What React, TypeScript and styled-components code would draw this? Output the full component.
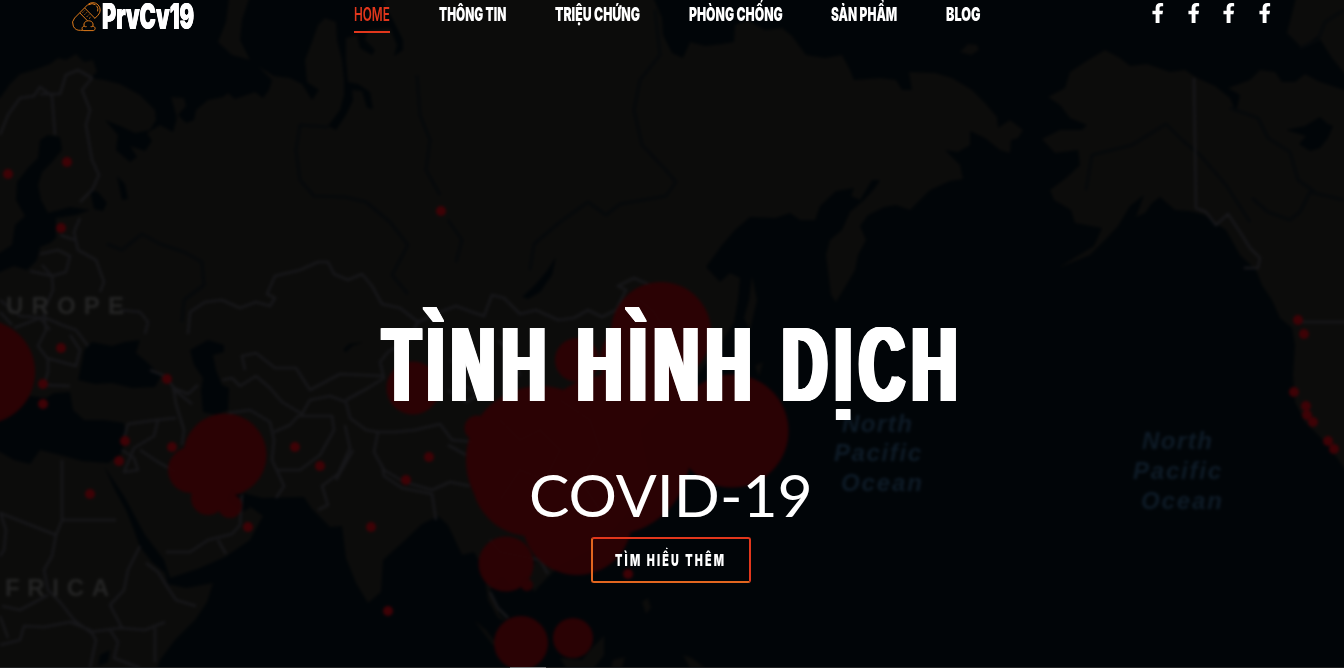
import React, { useLayoutEffect, useRef, useState } from "react";
import styled, { createGlobalStyle } from "styled-components";
import { FaFacebookF } from "react-icons/fa";

const GlobalStyle = createGlobalStyle`
  *, *::before, *::after { box-sizing: border-box; }
  body { margin: 0; background: #010508; overflow: hidden; }
  a { color: inherit; text-decoration: none; }
`;

const condensed = `Inter, "Liberation Sans", sans-serif`;

const Page = styled.div`
  position: relative;
  display: flex;
  flex-direction: column;
  width: 1344px;
  height: 668px;
  overflow: hidden;
  background: #010508;
  font-family: ${condensed};
  color: #fff;
`;

const MapLayer = styled.svg`
  position: absolute;
  inset: 0;
  width: 1344px;
  height: 668px;
`;

const Header = styled.header`
  position: relative;
  display: flex;
  align-items: flex-start;
  height: 40px;
  padding-left: 72px;
`;

const Brand = styled.a`
  display: flex;
  width: 282px;
`;

const BrandIcon = styled.svg`
  width: 30px;
  height: 32px;
  flex: none;
`;

const BrandName = styled.span`
  font-weight: 900;
  font-size: 36px;
  line-height: 32px;
  text-shadow: -0.5px 0, 0.5px 0;
`;

const Nav = styled.nav`
  display: flex;
  width: 798px;
  gap: 48.7px;
`;

const NavLink = styled.a<{ $active?: boolean }>`
  height: 33px;
  padding-top: 2px;
  font-size: 19px;
  line-height: 25px;
  font-weight: ${(p) => (p.$active ? 600 : 900)};
  color: ${(p) => (p.$active ? "#e2371c" : "#fff")};
  border-bottom: 2px solid ${(p) => (p.$active ? "#e2371c" : "transparent")};
`;

const Social = styled.div`
  display: flex;
  gap: 16px;
  padding-top: 3px;
  margin-left: -4px;
`;

const SocialLink = styled.a`
  display: flex;
  justify-content: center;
  width: 19.6px;
  font-size: 20px;
`;

const Hero = styled.main`
  position: relative;
  display: flex;
  flex-direction: column;
  align-items: center;
  padding: 264px 3px 0 0;
`;

/* The horizontal shadows thicken the stems without touching the crossbars. */
const Title = styled.h1`
  display: flex;
  gap: 24px;
  margin: 0 0 0 6px;
  font-family: "Liberation Sans", sans-serif;
  font-size: 106px;
  line-height: 120px;
  font-weight: 700;
  letter-spacing: 12px;
  text-shadow: -1.6px 0, 1.6px 0, -3.2px 0, 3.2px 0, -4.4px 0, 4.4px 0, -5.2px 0, 5.2px 0;
`;

const Subtitle = styled.p`
  margin: 36px 0 0;
  font-family: Lato, "Open Sans", sans-serif;
  font-size: 58px;
  line-height: 70px;
  font-weight: 400;
`;

const Cta = styled.a`
  display: flex;
  justify-content: center;
  align-items: center;
  width: 160px;
  height: 46px;
  margin: 7px 0 0 1px;
  padding-right: 1px;
  border: 2px solid;
  border-color: #e2371c #e2371c #e2661f #e2661f;
  border-radius: 3px;
  font-size: 16.5px;
  line-height: 24px;
  font-weight: 900;
  letter-spacing: 3.4px;
`;

const FootLine = styled.div`
  position: absolute;
  left: 0;
  right: 0;
  bottom: 0;
  height: 1px;
  padding-left: 510px;
  background: #202122;
  &::before {
    content: "";
    display: block;
    width: 36px;
    height: 1px;
    background: #77787a;
  }
`;

const FitBox = styled.span<{ $width: number }>`
  display: block;
  width: ${(p) => p.$width}px;
  white-space: nowrap;
`;

const FitInner = styled.span`
  display: inline-block;
  transform-origin: 0 50%;
`;

/* Condenses its text horizontally so that it fills the given width. */
function FitText({ width, children }: { width: number; children: string }) {
  const ref = useRef<HTMLSpanElement>(null);
  const [scale, setScale] = useState(1);
  useLayoutEffect(() => {
    if (ref.current) setScale(width / ref.current.offsetWidth);
  }, [width, children]);
  return (
    <FitBox $width={width}>
      <FitInner ref={ref} style={{ transform: `scaleX(${scale})` }}>
        {children}
      </FitInner>
    </FitBox>
  );
}

const LAND = [
  // Scandinavia, Russia and the Pacific coast, then back along South Asia
  "M-10 98L0 98 10 84 20 74 34 70 50 64 58 58 66 60 76 54 84 62 93 60 97 72 90 78 104 80 120 84 140 95 155 110 156 120 150 130 135 133 120 126 105 120 118 135 116 150 130 162 137 157 130 146 145 151 152 141 147 133 160 125 173 132 177 118 171 97 184 98 186 106 178 115 186 123 194 120 196 110 208 100 223 97 228 93 235 99 255 92 263 98 269 90 272 80 258 66 274 76 290 78 302 84 312 100 319 90 307 82 305 60 312 42 318 25 325 18 336 22 337 40 342 60 344 80 344 95 340 110 328 126 336 130 346 115 353 100 352 90 362 91 367 108 373 109 370 92 358 84 348 82 346 60 346 38 357 35 360 48 372 55 375 50 365 40 368 30 390 28 397 45 394 56 403 50 403 40 393 20 384 5 386 -10 650 -10 662 18 663 35 672 53 683 58 690 42 705 46 722 44 734 42 735 25 748 20 765 30 782 28 792 36 806 55 825 58 842 55 850 70 854 80 880 78 896 80 902 90 912 90 909 72 935 73 952 78 972 90 985 103 997 117 998 128 1010 120 1023 130 1018 138 1011 140 1010 153 1000 150 985 138 970 131 970 145 958 152 945 150 960 165 963 179 950 181 930 190 910 210 896 205 884 207 868 215 860 226 866 240 858 255 855 270 848 282 836 302 831 295 826 255 830 240 842 230 850 212 864 200 875 188 880 180 872 180 860 200 851 196 854 188 836 191 820 206 815 220 800 220 790 213 775 218 750 217 735 230 722 245 706 267 720 282 730 273 740 278 738 300 734 322 720 345 700 372 680 390 640 430 648 470 630 510 600 545 560 565 545 580 534 592 526 574 540 556 535 560 515 590 502 575 490 590 500 615 508 622 498 618 488 600 484 570 474 552 462 555 448 525 438 516 422 524 402 543 383 560 381 592 368 603 356 583 346 558 342 526 330 527 312 509 304 497 262 498 243 493 244 502 263 516 250 540 225 557 200 568 170 578 164 560 145 535 125 498 104 466 115 490 126 510 134 530 140 547 152 562 165 573 168 584 186 588 213 583 207 602 195 620 175 640 160 660 154 678 -10 678Z",
  "M230 -10L252 -10 242 20 240 40 250 60 232 55 218 42 226 22Z",
  "M1105 50L1120 58 1130 66 1147 64 1170 72 1185 70 1197 78 1215 86 1230 98 1236 112 1240 95 1228 88 1250 80 1260 70 1275 72 1282 82 1295 82 1305 74 1320 82 1344 90 1354 92 1354 478 1344 468 1328 445 1305 422 1295 402 1293 375 1295 345 1292 328 1280 318 1272 300 1262 285 1256 270 1240 255 1226 230 1214 222 1205 215 1190 211 1175 210 1160 197 1152 203 1145 213 1136 217 1144 195 1130 206 1118 226 1105 240 1090 255 1058 268 1094 246 1102 228 1075 223 1071 210 1054 200 1050 190 1066 178 1080 165 1078 150 1055 153 1042 139 1060 130 1082 130 1087 125 1070 118 1060 105 1048 97 1065 88 1070 72 1085 62Z",
  "M1298 -10L1354 -10 1354 85 1332 58 1318 36 1302 48 1287 33Z",
  "M960 52L968 44 977 45 979 50 971 55Z",
  "M752 276L757 300 750 330 744 318 749 300Z",
  "M755 366L763 362 759 376Z",
  "M474 620L486 630 500 648 492 644Z",
  "M592 648L604 636 604 655 594 668 566 668 560 658 582 660Z",
  "M642 602L648 598 651 608 646 614Z",
  "M613 660L625 657 622 668 611 668Z",
  "M683 655L692 658 705 668 690 668Z",
];

const WATER = [
  "M40 140L48 135 60 137 62 150 52 162 42 172 38 185 41 200 48 213 70 207 90 210 76 215 56 218 56 238 50 243 40 247 37 260 27 270 14 266 -10 276 -10 259 12 245 15 225 25 216 16 200 17 182 28 168 38 158Z",
  "M90 190L98 192 107 203 103 211 94 209Z",
  "M117 176L125 184 128 199 122 200Z",
  "M82 362L84 350 92 342 112 346 125 342 140 340 136 353 148 363 161 376 155 387 132 388 112 383 95 384 78 380Z",
  "M-10 420L18 408 30 396 46 398 54 393 70 392 73 410 84 420 104 420 124 423 126 440 120 455 108 463 82 461 64 456 40 450 30 464 14 460 -10 446Z",
  "M190 350L208 340 224 345 224 352 213 355 216 370 222 385 229 388 228 410 216 415 203 412 201 390 203 378 194 365Z",
  "M556 257L552 275 540 292 528 299 522 297 535 285 546 272Z",
  "M232 488L242 495 250 508 242 512 226 500Z",
  "M1286 130L1305 126 1320 117 1328 124 1333 126 1328 138 1320 148 1310 151 1299 144 1306 136Z",
  "M100 655L110 650 108 662 98 666Z",
  "M343 350L349 344 364 342 352 346 346 352Z",
];

const RIVERS =
  "M328 127L300 125 296 150 300 180 314 196 345 197 366 202 390 222 408 245 392 275 408 294 M417 75L420 115 430 140 426 170 440 195 M448 220L462 240 456 262 M655 10L660 55 640 80 634 110 642 145 664 168 676 182 666 196 620 204 606 215 588 202 560 222 534 244 530 270 M1344 200L1310 192 1300 212 1290 220 1268 212 1252 198 M1230 108L1258 118 1268 138 1290 152 1298 180 1315 192 M1086 190L1092 155 1132 145 1166 124 1182 140 1200 155 1226 185 1250 222 M107 244L122 250 142 234 160 244 184 252 202 262 204 285 184 300 182 322 M1344 10L1325 22 1318 40 1300 48";

const BORDERS =
  "M0 135L8 115 20 98 34 96 40 87 52 96 55 135 M40 94L60 94 66 75 78 70 92 78 82 90 90 110 86 125 92 160 99 175 92 190 80 202 M80 218L74 232 78 250 96 260 104 282 100 292 M60 235L75 240 M40 254L58 250 70 256 66 272 52 276 42 265 M30 271L52 276 53 290 44 310 46 330 38 346 47 358 76 366 80 350 70 335 M0 300L20 316 46 318 62 325 76 330 88 346 M14 328L40 318 50 330 M0 312L12 325 M48 358L48 372 44 385 70 386 M120 310L140 312 148 322 145 334 M188 334L190 312 205 302 222 300 240 308 256 302 270 306 275 298 267 294 275 276 300 270 318 262 328 262 334 274 348 280 362 274 372 286 382 304 400 308 418 322 440 312 456 306 472 312 484 316 492 295 504 298 520 314 536 310 558 320 574 318 588 310 602 317 616 310 626 290 618 286 634 278 652 286 M418 322L408 340 388 352 380 362 384 378 368 388 346 400 M245 370L242 356 256 353 275 368 296 368 310 390 340 374 384 376 M222 380L232 378 240 386 256 376 270 388 282 402 302 414 310 400 330 396 346 402 350 418 366 430 378 432 395 432 415 430 440 424 452 440 476 442 M378 432L374 452 384 470 404 482 432 490 450 482 470 486 M382 465L384 476 402 488 432 494 436 520 M150 370L165 376 174 388 188 394 198 385 M173 386L176 404 184 430 182 445 M172 388L192 404 M228 413L250 410 270 422 274 440 272 460 284 486 276 498 M274 432L290 425 298 416 332 416 334 430 320 455 300 470 276 470 M345 425L350 448 338 474 322 486 328 505 318 510 M353 450L336 480 M124 438L128 424 156 420 176 418 M158 420L154 436 134 448 124 472 138 470 134 458 122 450 M140 450L158 462 176 472 M62 460L62 520 56 535 M62 520L116 520 M0 513L56 535 52 556 44 570 48 590 60 602 74 620 90 632 120 628 145 630 165 622 M166 552L190 552 208 540 232 534 240 525 242 495 M218 540L226 554 M140 546L128 570 124 590 110 605 122 628 M146 563L158 572 168 588 176 600 196 606 M2 606L20 610 48 595 M0 616L8 638 M0 645L20 640 24 626 44 627 70 622 90 630 96 640 90 668 M110 630L118 642 114 658 140 668 M155 628L155 662 M0 512L6 530 4 550 0 556 M1194 78L1196 208 1206 212 1216 225 1228 214 1240 232 1250 248 1260 258 1258 268 1244 268 M1300 322L1354 322 M450 360L470 372 460 382 482 398 M498 340L510 352 520 376 M500 420L520 440 540 430 560 450 545 480 520 470 500 500 M560 400L590 420 600 450 580 480 600 510 M448 390L466 402 480 394 M448 445L466 455 M490 540L500 552 540 560 548 574 M490 592L498 608 508 618 M640 300L654 312 660 322 690 334";

const OUTBREAKS: [number, number, number][] = [
  [-17, 372, 52], [225, 455, 41.5], [191, 470, 23], [208, 498, 17], [230, 506, 12],
  [413, 388, 26.5], [661, 332, 50], [577, 360, 22], [640, 360, 40], [732, 431, 56.5],
  [540, 460, 74], [530, 478, 58], [577, 520, 55], [610, 455, 80], [640, 420, 60], [477, 428, 12.5],
  [506, 564, 27.5], [527, 585, 6], [521, 643, 27], [573, 638, 20],
];

const CASES: [number, number][] = [
  [8, 174], [67, 162], [61, 228], [441, 211], [61, 348], [43, 384], [43, 404],
  [167, 379], [125, 441], [119, 461], [172, 447], [90, 494], [248, 527],
  [295, 447], [320, 466], [429, 457], [406, 480], [371, 527], [388, 611],
  [628, 574], [1298, 320], [1304, 334], [1294, 392], [1306, 406], [1307, 415],
  [1313, 422], [1328, 441], [1334, 449],
];

const LABELS = [
  { text: "UROPE", x: 6, y: 314, w: 118, italic: false },
  { text: "FRICA", x: 5, y: 596, w: 104, italic: false },
  { text: "North", x: 842, y: 432, w: 70, italic: true },
  { text: "Pacific", x: 834, y: 461, w: 87, italic: true },
  { text: "Ocean", x: 841, y: 491, w: 81, italic: true },
  { text: "North", x: 1142, y: 449, w: 70, italic: true },
  { text: "Pacific", x: 1133, y: 479, w: 88, italic: true },
  { text: "Ocean", x: 1141, y: 509, w: 81, italic: true },
];

const MapLabel = styled.text<{ $italic: boolean }>`
  font-family: "Liberation Sans", sans-serif;
  font-weight: 700;
  font-size: 24px;
  font-style: ${(p) => (p.$italic ? "italic" : "normal")};
  fill: ${(p) => (p.$italic ? "#0e1b27" : "#242424")};
`;

function WorldMap() {
  return (
    <MapLayer viewBox="0 0 1344 668" aria-hidden="true">
      <defs>
        <filter
          id="soft"
          x="-10"
          y="-10"
          width="1364"
          height="688"
          filterUnits="userSpaceOnUse"
          colorInterpolationFilters="sRGB"
        >
          <feGaussianBlur stdDeviation="1.4" />
        </filter>
      </defs>
      <g filter="url(#soft)">
        <rect x="-10" y="-10" width="1364" height="688" fill="#010508" />
        <g fill="#0c0c0b">{LAND.map((d) => <path key={d} d={d} />)}</g>
        <g fill="#010508">{WATER.map((d) => <path key={d} d={d} />)}</g>
        <path d={RIVERS} fill="none" stroke="#06090b" strokeWidth="3" strokeLinejoin="round" />
        <path d={BORDERS} fill="none" stroke="#17171a" strokeWidth="2.6" strokeLinejoin="round" />
        <g fill="#2d0204" opacity="0.95">
          {OUTBREAKS.map(([x, y, r]) => <circle key={`${x}-${y}`} cx={x} cy={y} r={r} />)}
        </g>
        <g fill="#3e0206">
          {CASES.map(([x, y]) => <circle key={`${x}-${y}`} cx={x} cy={y} r={5} />)}
        </g>
        {LABELS.map((l) => (
          <MapLabel key={`${l.x}-${l.y}`} $italic={l.italic} x={l.x} y={l.y} textLength={l.w}>
            {l.text}
          </MapLabel>
        ))}
      </g>
    </MapLayer>
  );
}

function PillLogo() {
  return (
    <BrandIcon viewBox="0 0 30 32" fill="none" stroke="#dd7a1b" strokeWidth="1">
      <path d="M8.5 30.3A7.3 7.3 0 0 1 2.6 18L15.6 4.8A7.3 7.3 0 0 1 26 15.2L22.5 18.8M8.5 30.3H11" />
      <path d="M7.8 12.9L15.5 20.8M12.7 8L22.6 18" />
      <path d="M16.5 4.9Q20 2.4 23.6 4.8M24.6 5.8Q26.6 8.4 25.6 11.4" />
      <path d="M10.6 12.6L12.6 10.6M12.6 14.6L14.8 12.4M14.8 16.8L17 14.6M17 18.6L19 16.8" strokeDasharray="1.2 0.9" />
      <path d="M11.8 30.6C9.4 30 9.4 26.6 12.2 26.2C11.2 23 13.4 20.8 16.6 20.8C19.8 20.8 21.8 23 20.8 26.2C23.8 26.6 23.8 30 21.4 30.6ZM12.2 26.2Q13.4 27 14.6 26.6M20.8 26.2Q19.8 27 18.6 26.6" />
    </BrandIcon>
  );
}

const NAV_ITEMS = [
  { label: "HOME", width: 36 },
  { label: "THÔNG TIN", width: 67.3 },
  { label: "TRIỆU CHỨNG", width: 85.2 },
  { label: "PHÒNG CHỐNG", width: 93.5 },
  { label: "SẢN PHẨM", width: 66.5 },
  { label: "BLOG", width: 34.5 },
];

const TITLE_WORDS = [
  { text: "TÌNH", width: 169.5 },
  { text: "HÌNH", width: 181 },
  { text: "DỊCH", width: 182 },
];

export default function App() {
  return (
    <Page>
      <GlobalStyle />
      <WorldMap />
      <Header>
        <Brand href="#">
          <PillLogo />
          <BrandName>
            <FitText width={92}>PrvCv19</FitText>
          </BrandName>
        </Brand>
        <Nav>
          {NAV_ITEMS.map((item, i) => (
            <NavLink key={item.label} href="#" $active={i === 0}>
              <FitText width={item.width}>{item.label}</FitText>
            </NavLink>
          ))}
        </Nav>
        <Social>
          {[0, 1, 2, 3].map((n) => (
            <SocialLink key={n} href="#" aria-label="Facebook">
              <FaFacebookF />
            </SocialLink>
          ))}
        </Social>
      </Header>
      <Hero>
        <Title>
          {TITLE_WORDS.map((w) => (
            <FitText key={w.text} width={w.width}>{w.text}</FitText>
          ))}
        </Title>
        <Subtitle>
          <FitText width={284}>COVID-19</FitText>
        </Subtitle>
        <Cta href="#">
          <FitText width={111}>TÌM HIỂU THÊM</FitText>
        </Cta>
      </Hero>
      <FootLine />
    </Page>
  );
}
